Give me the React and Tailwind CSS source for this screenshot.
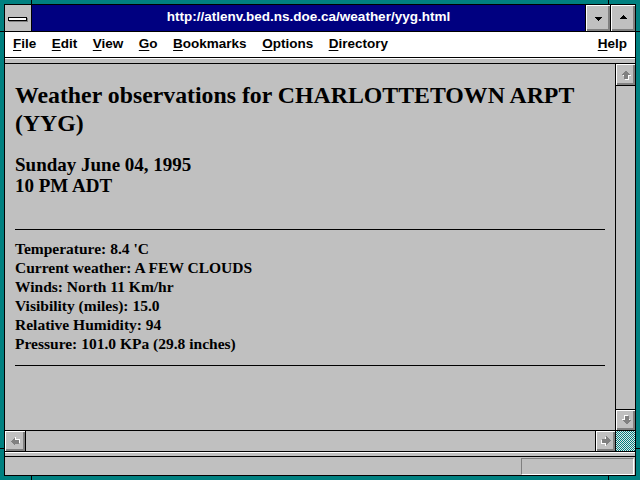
import React from "react";

const sans = { fontFamily: '"Liberation Sans", Arial, sans-serif' };
const serif = { fontFamily: '"Liberation Serif", "Times New Roman", serif' };

// grey disabled-look scroll arrow, drawn pointing up
function ScrollArrow({ className = "" }) {
  const pts = "4.5,0.5 9,5 6.5,5 6.5,9 2.5,9 2.5,5 0,5";
  return (
    <svg width="10" height="10" viewBox="0 0 10 10" className={className} shapeRendering="crispEdges">
      <polygon points={pts} fill="#ffffff" transform="translate(1,1)" />
      <polygon points={pts} fill="#808080" />
    </svg>
  );
}

const bevel =
  "bg-[#c0c0c0] shadow-[inset_1px_1px_0_#ffffff,inset_-1px_-1px_0_#808080,inset_-2px_-2px_0_#808080]";

function MenuItem({ first, rest }) {
  return (
    <span>
      <u className="underline-offset-2">{first}</u>
      {rest}
    </span>
  );
}

export default function App() {
  const data = [
    "Temperature: 8.4 'C",
    "Current weather: A FEW CLOUDS",
    "Winds: North 11 Km/hr",
    "Visibility (miles): 15.0",
    "Relative Humidity: 94",
    "Pressure: 101.0 KPa (29.8 inches)",
  ];

  return (
    <div className="relative w-[640px] h-[480px] bg-[#008080] p-[4px]">
      {/* frame corner ticks */}
      <div className="absolute left-[31px] top-0 w-px h-[4px] bg-black" />
      <div className="absolute left-[608px] top-0 w-px h-[4px] bg-black" />
      <div className="absolute left-[31px] bottom-0 w-px h-[4px] bg-black" />
      <div className="absolute left-[608px] bottom-0 w-px h-[4px] bg-black" />
      <div className="absolute left-0 top-[31px] w-[4px] h-px bg-black" />
      <div className="absolute right-0 top-[31px] w-[4px] h-px bg-black" />
      <div className="absolute left-0 top-[448px] w-[4px] h-px bg-black" />
      <div className="absolute right-0 top-[448px] w-[4px] h-px bg-black" />

      <div className="h-full border border-black flex flex-col bg-[#c0c0c0]">
        {/* title bar */}
        <div className="h-[27px] border-b border-black flex shrink-0">
          <div className="w-[27px] border-r border-black bg-[#c0c0c0] flex items-center justify-center">
            <div className="w-[19px] h-[4px] border border-black bg-white shadow-[1px_1px_0_#808080] -ml-[1px] mt-[2px]" />
          </div>
          <div
            className="flex-1 bg-[#000080] text-white font-bold text-[13.5px] flex items-center justify-center pb-[1px]"
            style={sans}
          >
            http://atlenv.bed.ns.doe.ca/weather/yyg.html
          </div>
          <div className={`w-[25px] border-l border-black flex items-center justify-center ${bevel}`}>
            <svg width="7" height="4" viewBox="0 0 7 4" shapeRendering="crispEdges" className="mt-[1px]">
              <polygon points="0,0 7,0 3.5,4" fill="#000" />
            </svg>
          </div>
          <div className={`w-[25px] border-l border-black flex items-center justify-center ${bevel}`}>
            <svg width="7" height="4" viewBox="0 0 7 4" shapeRendering="crispEdges" className="-mt-[3px]">
              <polygon points="3.5,0 7,4 0,4" fill="#000" />
            </svg>
          </div>
        </div>

        {/* menu bar */}
        <div
          className="h-[26px] border-b border-black bg-white flex items-center pl-[8px] pr-[8px] gap-[15.5px] text-[13.5px] font-bold text-black shrink-0"
          style={sans}
        >
          <MenuItem first="F" rest="ile" />
          <MenuItem first="E" rest="dit" />
          <MenuItem first="V" rest="iew" />
          <MenuItem first="G" rest="o" />
          <MenuItem first="B" rest="ookmarks" />
          <MenuItem first="O" rest="ptions" />
          <MenuItem first="D" rest="irectory" />
          <span className="ml-auto">
            <MenuItem first="H" rest="elp" />
          </span>
        </div>

        {/* strip */}
        <div className="h-[6px] border-t border-t-white border-b border-b-black bg-[#c0c0c0] shrink-0" />

        {/* main area */}
        <div className="flex h-[366px] shrink-0">
          <div className="flex-1 border-r border-black px-[10px] pt-[17px] text-black font-bold" style={serif}>
            <h1 className="text-[23.8px] leading-[28px]">
              Weather observations for CHARLOTTETOWN ARPT (YYG)
            </h1>
            <div className="mt-[17px] text-[19px] leading-[21px]">
              <div>Sunday June 04, 1995</div>
              <div>10 PM ADT</div>
            </div>
            <div className="mt-[33px] h-px bg-black" />
            <div className="mt-[9px] text-[15.5px] leading-[19px]">
              {data.map((d) => (
                <div key={d}>{d}</div>
              ))}
            </div>
            <div className="mt-[12px] h-px bg-black" />
          </div>
          <div className="w-[19px] flex flex-col">
            <div className={`h-[22px] border-b border-black flex items-center justify-center ${bevel}`}>
              <ScrollArrow />
            </div>
            <div className="flex-1" />
            <div className={`h-[21px] border-t border-black flex items-center justify-center ${bevel}`}>
              <ScrollArrow className="rotate-180" />
            </div>
          </div>
        </div>

        {/* horizontal scrollbar */}
        <div className="h-[21px] border-t border-black flex shrink-0">
          <div className={`w-[21px] border-r border-black flex items-center justify-center ${bevel}`}>
            <ScrollArrow className="-rotate-90" />
          </div>
          <div className="flex-1" />
          <div className={`w-[20px] border-l border-black flex items-center justify-center ${bevel}`}>
            <ScrollArrow className="rotate-90" />
          </div>
          <div className="w-[20px] border-l border-black bg-[repeating-conic-gradient(#008080_0_25%,#e8e8e8_0_50%)] bg-[length:2px_2px]" />
        </div>

        {/* strip */}
        <div className="h-[6px] border-t border-t-black border-b border-b-black bg-[#c0c0c0] shrink-0">
          <div className="h-px bg-white" />
        </div>

        {/* status bar */}
        <div className="flex-1 flex justify-end items-stretch pt-[1px] pr-px">
          <div className="w-[113px] border-t border-l border-[#808080] border-r-white border-b-white border-r border-b" />
        </div>
      </div>
    </div>
  );
}
